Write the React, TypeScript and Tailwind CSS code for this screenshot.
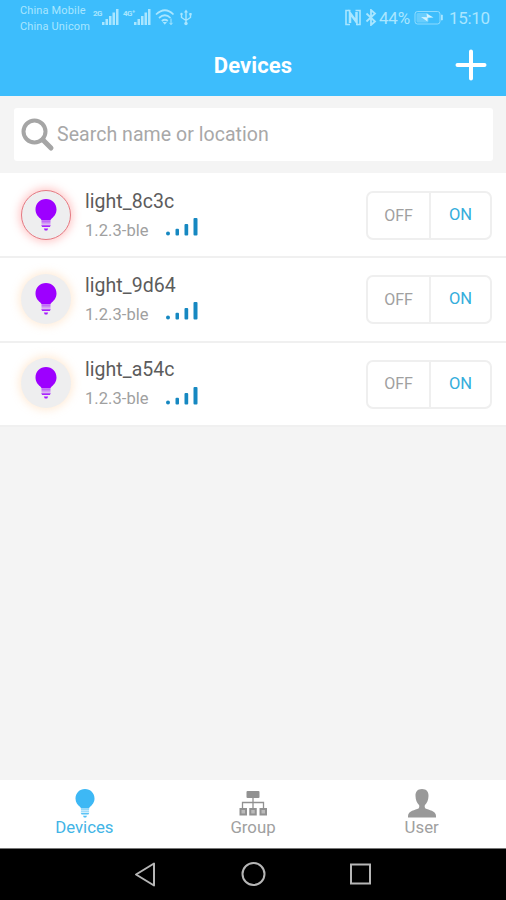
import React from "react";

type BulbProps = { className?: string };

function Bulb({ className }: BulbProps) {
  return (
    <svg viewBox="0 0 22 32" className={className} fill="currentColor">
      <path d="M11 0C4.900 0 .500 4.600.500 10.400c0 4.400 2.600 7 4.600 8.900.900.900 1.400 1.600 1.400 2.200h9c0-.600.500-1.300 1.400-2.200 2-1.900 4.600-4.500 4.600-8.900C21.500 4.600 17.100 0 11 0Z" />
      <rect x="6.500" y="22" width="9" height="1.800" opacity="0.550" />
      <rect x="6.500" y="24.400" width="9" height="1" opacity="0.550" />
      <path d="M6.200 26.300h9.600l-1 1.700H7.200Z" opacity="0.850" />
      <path d="M8.800 29.500h4.400L12.200 31.500H9.800Z" opacity="0.900" />
    </svg>
  );
}

function MobileSignal() {
  return (
    <svg viewBox="0 0 17 17" className="h-[17px] w-[17px]" fill="currentColor">
      <rect x="0" y="13" width="2.500" height="3" />
      <rect x="3.500" y="10" width="2.500" height="6" />
      <rect x="7" y="7" width="2.500" height="9" />
      <rect x="10.500" y="3.500" width="2.500" height="12.500" />
      <rect x="14" y="0" width="2.500" height="16" />
    </svg>
  );
}

function StatusBar() {
  return (
    <div className="flex h-[37px] pl-5 text-[#a9e6ff]">
      <div className="w-[73px] pt-[3px] text-[11px] leading-[15.5px] whitespace-nowrap">
        <div className="tracking-[0.15px]">China Mobile</div>
        <div className="tracking-[0.15px]">China Unicom</div>
      </div>
      <div className="flex pt-[9px]">
        <span className="w-[9px] text-[8px] leading-[9px] font-bold tracking-[-0.5px]">2G</span>
        <MobileSignal />
        <span className="ml-[4px] w-[11px] text-[8px] leading-[9px] font-bold tracking-[-0.5px]">4G⁺</span>
        <MobileSignal />
        <svg viewBox="0 0 20 17" className="ml-[4px] h-[17px] w-5" fill="none" stroke="currentColor" strokeWidth="1.7">
          <path d="M1 5.500Q10-3 18.500 5.500M4 9Q10 3.500 15.500 9M6.800 12Q10 9.500 12.800 12" />
          <path d="M7.700 13L9.800 15.800 12 13Z" fill="currentColor" stroke="none" />
          <path d="M16 9.500v6M14.500 13.800l1.500 1.800 1.500-1.800" strokeWidth="1" />
        </svg>
        <svg viewBox="0 0 12 17" className="ml-[5px] h-[17px] w-3" fill="none" stroke="currentColor" strokeWidth="1.4">
          <path d="M6 2v12M1.500 5v3.500L6 11.500l4.500-3V5" />
          <path d="M4 3.500L6 .5l2 3Z" fill="currentColor" stroke="none" />
          <circle cx="6" cy="14.500" r="1.700" fill="currentColor" stroke="none" />
          <circle cx="1.500" cy="5" r="1.200" fill="currentColor" stroke="none" />
          <rect x="9.300" y="4" width="2.300" height="2.300" fill="currentColor" stroke="none" />
        </svg>
      </div>
      <div className="ml-auto flex pt-[9px] pr-4">
        <svg viewBox="0 0 17 17" className="h-[17px] w-[17px]" fill="none" stroke="currentColor">
          <path d="M5.500 1.500H1v14h4M10.500 1.500H15v14h-4" strokeWidth="1.600" />
          <path d="M5 14V4L11.500 13V3" strokeWidth="2.500" />
        </svg>
        <svg viewBox="0 0 12 17" className="ml-[3px] h-[17px] w-3" fill="none" stroke="currentColor" strokeWidth="1.8">
          <path d="M1.500 4.500l8.500 8-4 3.500V1l4 3.500-8.500 8" />
        </svg>
        <span className="ml-[2px] w-[33px] text-[17px] leading-[19px] tracking-[-0.2px] whitespace-nowrap">44%</span>
        <svg viewBox="0 0 30 17" className="ml-[2px] h-[17px] w-[30px]" fill="none" stroke="currentColor">
          <rect x="1" y="2.500" width="25" height="12.500" rx="2.500" strokeWidth="1" opacity=".75" />
          <rect x="2.500" y="4" width="12" height="9.500" rx="1.500" fill="currentColor" stroke="none" opacity=".4" />
          <path d="M27 6h1.500v5H27" fill="currentColor" strokeWidth=".6" />
          <path d="M7 8l6 .3L12.500 4.500l7 4-6 .3L13.500 12.500Z" fill="#d2f3ff" stroke="none" />
        </svg>
        <span className="ml-[5px] w-[41px] text-[17px] leading-[19px] tracking-[-0.3px] whitespace-nowrap">15:10</span>
      </div>
    </div>
  );
}

function Device({ name, active }: { name: string; active?: boolean }) {
  return (
    <li className="flex h-[84.3px] border-b-2 border-[#f0f0f0] bg-white pr-[14px] pl-[21px]">
      <div
        className={
          active
            ? "mt-[15.5px] flex h-[50px] w-[50px] justify-center rounded-full border border-[#e57982] bg-[#eeeeef] pt-[8px] shadow-[0_0_8px_2px_rgba(255,120,120,0.4)]"
            : "mt-[15.5px] flex h-[50px] w-[50px] justify-center rounded-full bg-[#eeeeef] pt-[9px] shadow-[0_0_8px_2px_rgba(255,205,155,0.4)]"
        }
      >
        <Bulb className="h-8 w-[22px] text-[#9d00ff]" />
      </div>
      <div className="ml-[14px] pt-[15.5px]">
        <div className="text-[19.5px] leading-[24px] tracking-[0.05px] whitespace-nowrap text-[#5c5c5c]">{name}</div>
        <div className="flex">
          <span className="w-[81px] pt-[7px] text-[16.5px] leading-[20px] tracking-[0.05px] text-[#a0a0a0]">1.2.3-ble</span>
          <svg viewBox="0 0 32 18" className="mt-[4.5px] h-[18px] w-8" fill="#1688c1">
            <rect x="0" y="13.500" width="4" height="4" rx="2" />
            <rect x="9.500" y="10.800" width="3.500" height="6.700" rx="1" />
            <rect x="18.500" y="6" width="3.700" height="11.500" rx="1" />
            <rect x="27.500" y="0" width="4" height="17.500" rx="1" />
          </svg>
        </div>
      </div>
      <div className="mt-[17px] ml-auto flex h-[49px] w-[126px] rounded-[7px] border-2 border-[#efefef] text-[16px]">
        <button className="w-[61px] text-[#a0a0a0]">OFF</button>
        <button className="flex-1 border-l-2 border-[#efefef] text-[16.5px] text-[#35aedc]">ON</button>
      </div>
    </li>
  );
}

function GroupIcon() {
  return (
    <svg viewBox="0 0 28 26" className="h-[26px] w-7" fill="none" stroke="#919191">
      <rect x="7.500" y="1" width="13" height="7" rx="1" fill="#919191" stroke="none" />
      <path d="M14 8v11M3.500 19v-6.500h21V19" strokeWidth="1.3" />
      <rect x="1.500" y="19" width="5.500" height="5.500" fill="#bbb" strokeWidth="2" />
      <rect x="11.250" y="19" width="5.500" height="5.500" fill="#bbb" strokeWidth="2" />
      <rect x="21.500" y="19" width="5.500" height="5.500" fill="#bbb" strokeWidth="2" />
    </svg>
  );
}

export default function App() {
  return (
    <div className="flex h-[900px] w-[506px] flex-col overflow-hidden bg-[#f4f4f4] font-['Roboto',sans-serif]">
      <header className="h-24 bg-[#3dbdfc]">
        <StatusBar />
        <div className="grid h-14 grid-cols-3 items-center text-white">
          <span />
          <h1 className="text-center text-[22px] font-bold tracking-[0.1px]">Devices</h1>
          <svg viewBox="0 0 32 32" className="mr-[19px] h-8 w-8 justify-self-end" stroke="currentColor" strokeWidth="4" strokeLinecap="round">
            <path d="M16 2.500v27M2.500 16h27" />
          </svg>
        </div>
      </header>
      <div className="h-[77px] pt-3 pr-[13px] pb-3 pl-[14px]">
        <div className="flex h-[53px] items-center rounded-[3px] bg-white pl-[7px] text-[19.5px] text-[#a8a8a8]">
          <svg viewBox="0 0 34 34" className="h-[34px] w-[34px]" fill="none" stroke="#a5a5a5">
            <circle cx="13.500" cy="13.500" r="11" strokeWidth="4" />
            <path d="M22 22l8 8" strokeWidth="5" strokeLinecap="round" />
          </svg>
          <span className="ml-[2px] tracking-[0.05px]">Search name or location</span>
        </div>
      </div>
      <ul className="bg-white pt-px">
        <Device name="light_8c3c" active />
        <Device name="light_9d64" />
        <Device name="light_a54c" />
      </ul>
      <nav className="mt-auto grid h-[68px] grid-cols-3 bg-white text-[16.8px] leading-[20px] text-[#a0a0a0]">
        <div className="flex flex-col items-center pt-[9px] text-[#42b4e6]">
          <Bulb className="ml-px h-[29px] w-5 text-[#3db8f5]" />
          <span className="-mt-px">Devices</span>
        </div>
        <div className="flex flex-col items-center pt-[10px]">
          <GroupIcon />
          <span className="mt-px">Group</span>
        </div>
        <div className="flex flex-col items-center pt-[9px]">
          <svg viewBox="0 0 30 29" className="ml-px h-[29px] w-[30px]" fill="#999">
            <path d="M15 0c4.500 0 6.700 2.800 6.500 7-.1 4-1.400 6.800-3.500 9-.6.700-.3 2.800.5 3.500 3 1.500 10.500 2.300 10.500 7.500v1.500H1V27c0-5.200 7.500-6 10.500-7.500.8-.7 1.100-2.800.5-3.500-2.100-2.200-3.400-5-3.500-9C8.300 2.800 10.500 0 15 0Z" />
          </svg>
          <span className="-mt-px">User</span>
        </div>
      </nav>
      <footer className="flex h-[52px] items-center border-t border-[#777] bg-black pb-[2px] pl-[133px]">
        <svg viewBox="0 0 24 26" className="h-[26px] w-6" fill="none" stroke="#b6b6b6" strokeWidth="2" strokeLinejoin="round">
          <path d="M21 2.500v22L3 13.500Z" />
        </svg>
        <svg viewBox="0 0 26 26" className="ml-[84px] h-[26px] w-[26px]" fill="none" stroke="#b6b6b6" strokeWidth="2">
          <circle cx="12.500" cy="13" r="11" />
        </svg>
        <svg viewBox="0 0 24 24" className="ml-[82px] h-6 w-6" fill="none" stroke="#b6b6b6" strokeWidth="2">
          <rect x="2" y="2.500" width="19" height="19" />
        </svg>
      </footer>
    </div>
  );
}
